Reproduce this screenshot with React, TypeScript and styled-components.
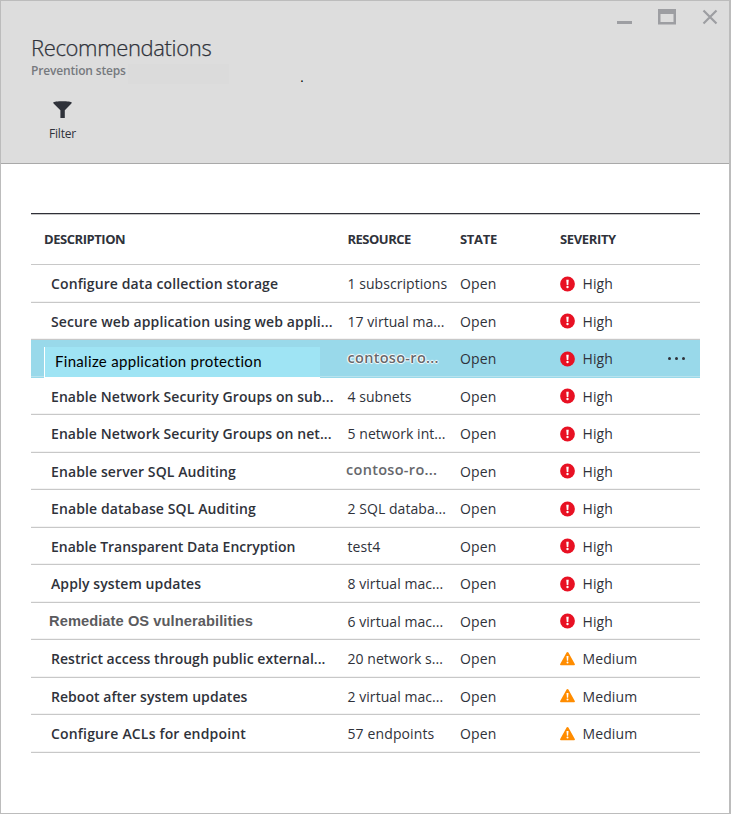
import React from 'react';
import styled, { createGlobalStyle, css } from 'styled-components';

const GlobalStyle = createGlobalStyle`
  * { box-sizing: border-box; }
  body { margin: 0; background: #fff; }
`;

const Blade = styled.main`
  width: 731px;
  height: 814px;
  border: 1px solid #bcbcbc;
  border-right-width: 2px;
  background: #fff;
  font-family: 'Open Sans', 'Noto Sans', sans-serif;
  font-size: 14px;
  color: #2f323a;
`;

const Header = styled.header`
  position: relative;
  height: 163px;
  padding: 33px 0 0 30px;
  border-bottom: 1px solid #a9a9a9;
  background: #ddd;
`;

const WindowControls = styled.div`
  position: absolute;
  top: 8px;
  right: 11px;
  display: flex;
  gap: 26px;
  color: #9d9ea2;
  svg { display: block; }
`;

const Title = styled.h1`
  margin: 0;
  font-size: 22px;
  font-weight: 300;
  line-height: 26px;
  letter-spacing: -0.36px;
  -webkit-text-stroke: 0.25px #2f323a;
`;

const SubtitleRow = styled.div`
  display: flex;
  align-items: center;
  height: 20px;
  margin-top: 1px;
`;

const Subtitle = styled.h2`
  margin: 0;
  width: 97px;
  font-size: 12px;
  font-weight: 600;
  line-height: 20px;
  letter-spacing: -0.17px;
  color: #76797d;
`;

const Smudge = styled.div`
  width: 101px;
  height: 20px;
  margin-top: 5px;
  background: #dbdbdb;
`;

const Dot = styled.span`
  margin-left: 71px;
  margin-top: 11px;
  font: 14px/20px 'Liberation Sans', sans-serif;
  color: #000;
`;

const FilterButton = styled.button`
  display: flex;
  flex-direction: column;
  align-items: center;
  gap: 6px;
  width: 63px;
  margin-top: 20px;
  padding: 0;
  border: 0;
  background: none;
  color: #2f323a;
  font: 12px/18px 'Open Sans', sans-serif;
  letter-spacing: -0.2px;
  svg { display: block; }
`;

const Table = styled.section`
  width: 669px;
  margin: 49px 0 0 30px;
  border-top: 1px solid #2f3038;
`;

const grid = css`
  display: grid;
  grid-template-columns: 316.5px 112.5px 100px 110px 30px;
  align-items: center;
  white-space: nowrap;
`;

const HeadRow = styled.div`
  ${grid}
  height: 51px;
  padding-bottom: 2px;
  border-top: 1px solid #c6c6c6;
  border-bottom: 1px solid #c8c8c8;
  font-size: 13px;
  font-weight: 700;
`;

const HeadCell = styled.span<{ $indent?: number; $tracking: number }>`
  padding-left: ${p => p.$indent ?? 0}px;
  letter-spacing: ${p => p.$tracking}px;
`;

const Row = styled.div<{ $tall: boolean; $selected?: boolean }>`
  ${grid}
  height: ${p => (p.$tall ? 38 : 37)}px;
  border-bottom: 1px solid ${p => (p.$selected ? '#99d9ea' : '#c8c8c8')};
  background: ${p => (p.$selected ? '#99d9ea' : '#fff')};
  box-shadow: inset 0 -1px ${p => (p.$selected ? '#b9e3ee' : '#f4f4f4')};
`;

type Variant = 'normal' | 'edited' | 'arial';

const Description = styled.span<{ $variant: Variant; $tracking: number }>`
  padding-left: 20px;
  font-weight: 600;
  letter-spacing: ${p => p.$tracking}px;
  ${p => p.$variant === 'arial' && css`
    padding-left: 18px;
    font-family: 'Liberation Sans', Arial, sans-serif;
    font-size: 14.67px;
    font-weight: 700;
    color: #5b5b5e;
  `}
  ${p => p.$variant === 'edited' && css`
    align-self: end;
    width: 276px;
    height: 31px;
    margin: 0 0 -1px 13px;
    padding-left: 10px;
    border-left: 1px solid #fff;
    border-bottom: 1px solid #fff;
    background: #9fe4f4;
    font-family: Lato, sans-serif;
    font-size: 15px;
    font-weight: 400;
    line-height: 28px;
    color: #000;
  `}
`;

const Resource = styled.span<{ $tracking: number; $glow?: boolean; $masked?: boolean }>`
  letter-spacing: ${p => p.$tracking}px;
  ${p => p.$masked && css`
    margin: -4px 0 0 ${p.$glow ? 0 : -1.5}px;
    font-size: 14.5px;
    font-weight: 600;
    letter-spacing: 0.3px;
    color: #66686c;
  `}
  ${p => p.$glow && css`
    margin-top: -3px;
    text-shadow: 1px 0 1px #fff, -1px 0 1px #fff, 0 1px 1px #fff, 0 -1px 1px #fff;
  `}
`;

const State = styled.span`
  letter-spacing: 0.12px;
`;

const Severity = styled.span`
  display: flex;
  align-items: center;
  gap: 7.5px;
  letter-spacing: 0.1px;
  svg { display: block; }
`;

const More = styled.span`
  display: flex;
  gap: 4px;
  margin-left: -2px;
`;

const MoreDot = styled.i`
  width: 3px;
  height: 3px;
  border-radius: 50%;
  background: #2f323a;
`;

const HighIcon = () => (
  <svg width="15" height="16" viewBox="0 0 15 16">
    <circle cx="7.5" cy="8" r="7.4" fill="#e81123" />
    <path d="M6.3 3.8h2.4l-.4 5.2H6.7z" fill="#fff" />
    <circle cx="7.5" cy="11" r="1.2" fill="#fff" />
  </svg>
);

const MediumIcon = () => (
  <svg width="15" height="16" viewBox="0 0 15 16">
    <path d="M7.5.9c.4 0 .7.2.9.6l6.4 11.6c.3.6 0 1.2-.7 1.2H.9c-.7 0-1-.6-.7-1.2L6.6 1.5c.2-.4.5-.6.9-.6z" fill="#ff8c00" />
    <path d="M6.5 5h2l-.4 4.7H6.9z" fill="#fff" />
    <circle cx="7.5" cy="11.5" r="1" fill="#fff" />
  </svg>
);

interface Item {
  description: string;
  tracking: number;
  resource: string;
  resourceTracking?: number;
  severity: 'High' | 'Medium';
  variant?: Variant;
  masked?: boolean;
  selected?: boolean;
}

const items: Item[] = [
  { description: 'Configure data collection storage', tracking: 0.11, resource: '1 subscriptions', severity: 'High' },
  { description: 'Secure web application using web appli...', tracking: 0.12, resource: '17 virtual ma...', severity: 'High' },
  { description: 'Finalize application protection', tracking: 0.31, resource: 'contoso-ro...', severity: 'High', variant: 'edited', masked: true, selected: true },
  { description: 'Enable Network Security Groups on sub...', tracking: 0.08, resource: '4 subnets', severity: 'High' },
  { description: 'Enable Network Security Groups on net...', tracking: 0.08, resource: '5 network int...', severity: 'High' },
  { description: 'Enable server SQL Auditing', tracking: 0.11, resource: 'contoso-ro...', severity: 'High', masked: true },
  { description: 'Enable database SQL Auditing', tracking: 0.11, resource: '2 SQL databa...', severity: 'High' },
  { description: 'Enable Transparent Data Encryption', tracking: 0, resource: 'test4', severity: 'High' },
  { description: 'Apply system updates', tracking: 0.09, resource: '8 virtual mac...', severity: 'High' },
  { description: 'Remediate OS vulnerabilities', tracking: 0.07, resource: '6 virtual mac...', severity: 'High', variant: 'arial' },
  { description: 'Restrict access through public external...', tracking: 0.02, resource: '20 network s...', severity: 'Medium' },
  { description: 'Reboot after system updates', tracking: 0.05, resource: '2 virtual mac...', severity: 'Medium' },
  { description: 'Configure ACLs for endpoint', tracking: 0.17, resource: '57 endpoints', resourceTracking: 0.12, severity: 'Medium' },
];

export default function App() {
  return (
    <>
      <GlobalStyle />
      <Blade>
        <Header>
          <WindowControls>
            <svg width="15" height="16"><path d="M0 12h15v3H0z" fill="currentColor" /></svg>
            <svg width="18" height="16"><path fillRule="evenodd" d="M0 0h18v15.5H0zM2.5 5h13v8h-13z" fill="currentColor" /></svg>
            <svg width="16" height="16"><path d="M1.5 1.5l13 13m0-13l-13 13" stroke="currentColor" strokeWidth="2.2" /></svg>
          </WindowControls>
          <Title>Recommendations</Title>
          <SubtitleRow>
            <Subtitle>Prevention steps</Subtitle>
            <Smudge />
            <Dot>.</Dot>
          </SubtitleRow>
          <FilterButton>
            <svg width="20" height="18" viewBox="0 0 20 18">
              <path d="M.2 1.5C.7.8 4.7.3 9.5.3s8.8.5 9.3 1.2c.1.4-.2.8-.6 1.2L11.8 9.3V17H7.4V9.3L.8 2.7C.4 2.3.1 1.9.2 1.5z" fill="currentColor" />
            </svg>
            Filter
          </FilterButton>
        </Header>
        <Table>
          <HeadRow>
            <HeadCell $indent={13} $tracking={-0.45}>DESCRIPTION</HeadCell>
            <HeadCell $tracking={-0.5}>RESOURCE</HeadCell>
            <HeadCell $tracking={-0.3}>STATE</HeadCell>
            <HeadCell $tracking={-0.36}>SEVERITY</HeadCell>
          </HeadRow>
          {items.map((item, i) => (
            <Row key={item.description} $tall={i % 2 === 0} $selected={item.selected}>
              <Description $variant={item.variant ?? 'normal'} $tracking={item.tracking}>{item.description}</Description>
              <Resource $tracking={item.resourceTracking ?? 0.05} $masked={item.masked} $glow={item.selected}>{item.resource}</Resource>
              <State>Open</State>
              <Severity>
                {item.severity === 'High' ? <HighIcon /> : <MediumIcon />}
                {item.severity}
              </Severity>
              {item.selected && <More><MoreDot /><MoreDot /><MoreDot /></More>}
            </Row>
          ))}
        </Table>
      </Blade>
    </>
  );
}
